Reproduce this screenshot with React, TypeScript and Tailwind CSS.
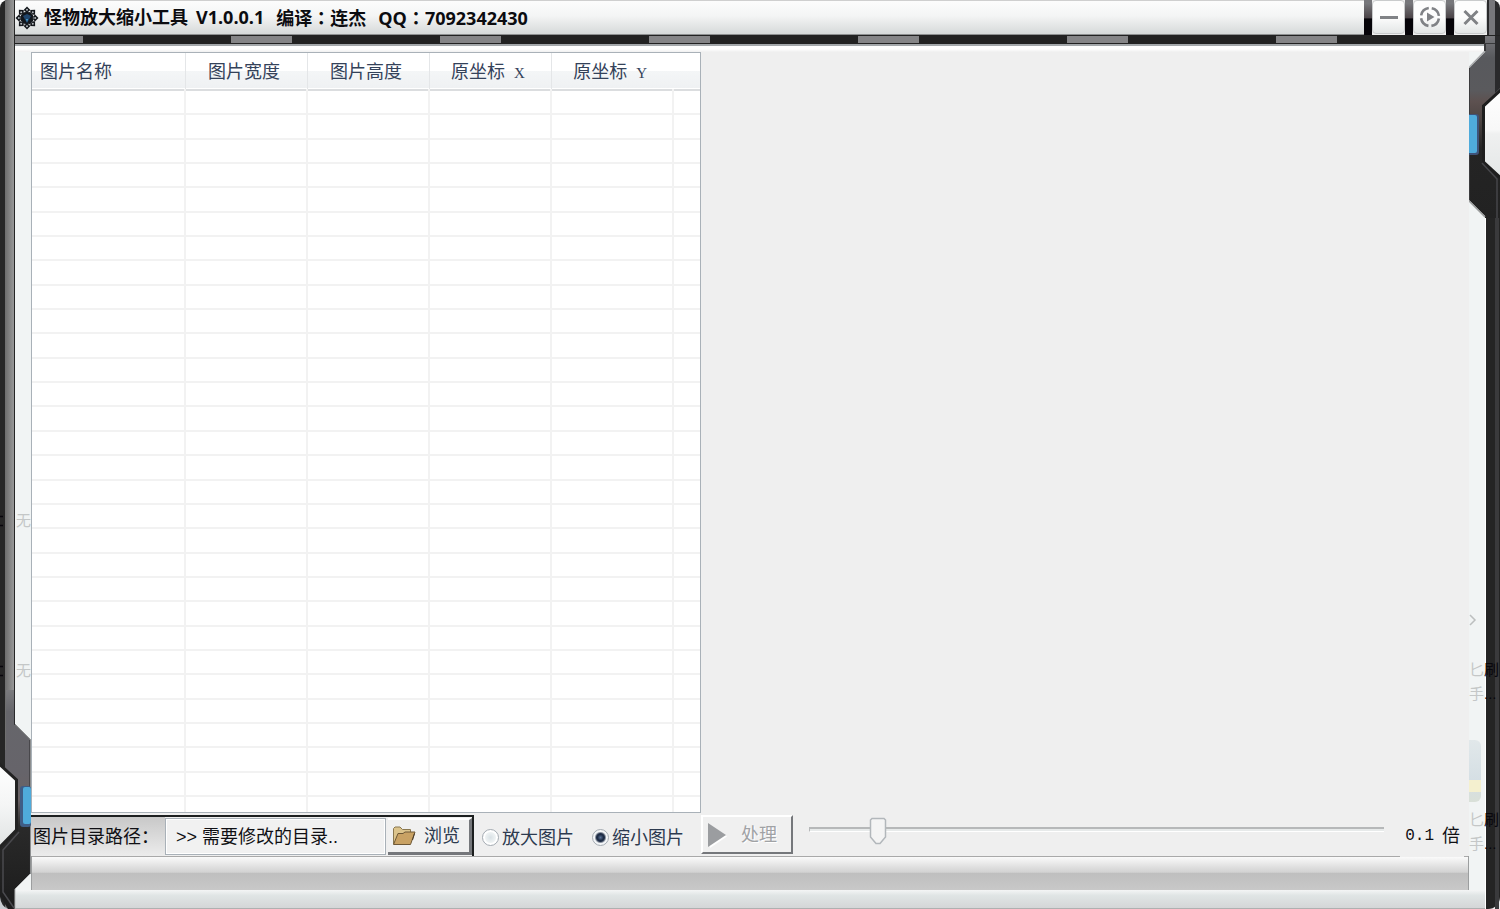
import { useState } from "react";

const ROWS = Array.from({ length: 29 }, (_, i) => i);
const PETALS = [0, 45, 90, 135, 180, 225, 270, 315];

const cjk = "font-['Liberation_Sans','Noto_Sans_CJK_SC',sans-serif]";

function AppIcon() {
  return (
    <svg viewBox="-12 -12 24 24" className="h-6 w-6 shrink-0" aria-hidden="true">
      {PETALS.map((a) => (
        <g key={a} transform={`rotate(${a})`}>
          <path d="M0 -11.5 L3.4 -8 L0 -5 L-3.4 -8 Z" fill="#14171c" />
          <circle cx="0" cy="-8.2" r="1" fill="#b4b9be" />
        </g>
      ))}
      <circle r="6.6" fill="#12161c" />
      <circle r="6.4" fill="none" stroke="#8d949b" strokeWidth="0.8" strokeDasharray="1.2 2.6" />
      <path d="M-4 -2 L0 -4 L4 -2 L0 5 Z" fill="#21466d" />
      <path d="M-1 1 L1 1 L0 4 Z" fill="#43a0d0" />
    </svg>
  );
}

function Colon() {
  return <span className="font-['Noto_Sans_CJK_TC',sans-serif]">：</span>;
}

function LeftRail() {
  return (
    <div className="flex w-[15px] shrink-0 bg-[#262626]">
      <div className="ml-[5px] w-[9px] bg-linear-to-r from-[#6c6c6c] to-[#989898]" />
    </div>
  );
}

function WindowButton({ label, children }: { label: string; children: React.ReactNode }) {
  return (
    <button
      type="button"
      aria-label={label}
      className="flex h-[34px] w-[33px] items-center justify-center rounded-sm border border-[#c9cbcc] bg-linear-to-b from-[#fdfdfd] from-50% to-[#e3e6e6]"
    >
      <svg viewBox="0 0 22 22" className="h-[22px] w-[22px]" fill="none" stroke="#808286" strokeWidth="3">
        {children}
      </svg>
    </button>
  );
}

function Gap() {
  return <div className="w-2 bg-linear-to-b from-[#77777b] from-10% via-[#4c4549] via-50% to-[#060409] to-55%" />;
}

function TitleBar() {
  return (
    <header className="flex h-[35px]">
      <LeftRail />
      <div className="flex min-w-0 flex-1 items-center gap-[5px] border-y border-t-[#cfcfcf] border-b-[#8d8f90] bg-linear-to-b from-[#fcfcfc] via-[#f4f5f5] via-45% to-[#d6d9d9]">
        <AppIcon />
        <h1 className="flex gap-x-3 text-[18px] leading-6 font-bold whitespace-nowrap text-[#0c0c10] font-['Open_Sans','Noto_Sans_CJK_SC',sans-serif]">
          <span className="flex gap-2">
            <span>怪物放大缩小工具</span>
            <span>V1.0.0.1</span>
          </span>
          <span>编译<Colon />连杰</span>
          <span>QQ<Colon />7092342430</span>
        </h1>
      </div>
      <Gap />
      <WindowButton label="最小化">
        <path d="M2 11.5H20" />
      </WindowButton>
      <Gap />
      <WindowButton label="菜单">
        <circle cx="11" cy="11" r="9" strokeWidth="2.6" strokeDasharray="11.1 3.037" strokeDashoffset="-1.5" />
        <path d="M8 6.5L15.5 11L8 15.5Z" fill="#808286" stroke="none" />
      </WindowButton>
      <Gap />
      <WindowButton label="关闭">
        <path d="M4.5 5L17.5 18M17.5 5L4.5 18" />
      </WindowButton>
      <div className="flex w-[13px] shrink-0 bg-[#2a2a2c]">
        <div className="ml-0.5 w-1.5 bg-[#77777b]" />
      </div>
    </header>
  );
}

function Strip() {
  return (
    <div className="flex h-[9px] bg-[#222222]">
      <LeftRail />
      <div className="my-px w-[7px] bg-[#858587]" />
      <div className="my-px flex-1 bg-[repeating-linear-gradient(90deg,#858587_0px,#858587_61px,#222222_61px,#222222_209px)]" />
      <div className="w-[5px] shrink-0" />
    </div>
  );
}

function ImageTable() {
  return (
    <div className="min-h-0 w-[670px] flex-1 border border-[#a9b1b8] bg-white">
      <table className={`h-full w-full table-fixed border-collapse text-[18px] leading-6 text-[#34425a] ${cjk}`}>
        <colgroup>
          <col className="w-[153px]" />
          <col className="w-[122px]" />
          <col className="w-[122px]" />
          <col className="w-[122px]" />
          <col className="w-[122px]" />
          <col />
        </colgroup>
        <thead>
          <tr className="h-[37px] border-b-2 border-[#dbdddf] bg-linear-to-b from-white from-50% via-[#f4f6f7] via-51% to-[#eff1f3]">
            <th scope="col" className="border-r border-[#e4e6e8] pt-0.5 pb-0 pl-2 text-left font-normal">图片名称</th>
            <th scope="col" className="border-r border-[#e4e6e8] pt-0.5 pr-1 font-normal">图片宽度</th>
            <th scope="col" className="border-r border-[#e4e6e8] pt-0.5 pr-1 font-normal">图片高度</th>
            <th scope="col" className="border-r border-[#e4e6e8] pt-0.5 pr-1 font-normal">
              原坐标 <span className="ml-1 text-[15px] font-['Liberation_Serif',serif]">X</span>
            </th>
            <th scope="col" className="pt-0.5 pr-1 font-normal">
              原坐标 <span className="ml-1 text-[15px] font-['Liberation_Serif',serif]">Y</span>
            </th>
            <td className="p-0" />
          </tr>
        </thead>
        <tbody>
          {ROWS.map((r) => (
            <tr key={r} className="border-b-2 border-[#f2f2f2]">
              <td className="border-r-2 border-[#f2f2f2] p-0" />
              <td className="border-r-2 border-[#f2f2f2] p-0" />
              <td className="border-r-2 border-[#f2f2f2] p-0" />
              <td className="border-r-2 border-[#f2f2f2] p-0" />
              <td className="border-r-2 border-[#f2f2f2] p-0" />
              <td className="p-0" />
            </tr>
          ))}
          <tr className="h-4">
            <td className="border-r-2 border-[#f2f2f2] p-0" />
            <td className="border-r-2 border-[#f2f2f2] p-0" />
            <td className="border-r-2 border-[#f2f2f2] p-0" />
            <td className="border-r-2 border-[#f2f2f2] p-0" />
            <td className="border-r-2 border-[#f2f2f2] p-0" />
            <td className="p-0" />
          </tr>
        </tbody>
      </table>
    </div>
  );
}

function FolderIcon() {
  return (
    <svg viewBox="0 0 24 20" className="h-5 w-6" aria-hidden="true">
      <path d="M1.5 18V2.5L3 1H8L10.5 3.5H18.5V8" fill="#dcc48c" stroke="#8a7850" />
      <path d="M1.5 18.5L6 7.5H11L13 6H23L18.5 18.5Z" fill="#c9a264" stroke="#6e5836" strokeLinejoin="round" />
      <path d="M20.500 14L22.500 7.500" stroke="#4a3a28" />
    </svg>
  );
}

const radioClass =
  "h-[17px] w-[17px] appearance-none rounded-full border border-[#a4abb2] bg-[radial-gradient(circle,#d9e1e5_0px,#eef2f3_5px,#ffffff_6px,#ffffff_7px)] checked:bg-[radial-gradient(circle_at_50%_50%,#5b7396_0px,#1c2b45_3px,#24324a_4px,#f4f6f8_6px)]";

function Controls() {
  const [mode, setMode] = useState("shrink");
  const [scale, setScale] = useState(12);
  return (
    <div className={`mt-0.5 flex h-[41px] items-stretch text-[18px] leading-6 text-[#2d3a4f] ${cjk}`}>
      <div className="flex w-[443px] shrink-0 border-t-2 border-r-2 border-[#1c1f1f] bg-[#efefef]">
        <label
          htmlFor="dir"
          className="flex w-[134px] items-center bg-linear-to-b from-[#c8c8c8] to-[#ececec] pl-0.5 whitespace-nowrap text-[#101014]"
        >
          图片目录路径：
        </label>
        <input
          id="dir"
          readOnly
          defaultValue=">> 需要修改的目录.."
          className="my-px w-[221px] border border-[#a9b1b8] bg-[#f1f1f1] px-2.5 text-[#101014] shadow-[inset_0_0_0_1px_#ffffff] outline-none"
        />
        <button
          type="button"
          className="my-px ml-0.5 flex flex-1 items-center gap-2 border-t-2 border-r-3 border-b-3 border-t-white border-r-[#75777b] border-b-[#75777b] bg-[#f0f0f0] pl-1"
        >
          <FolderIcon />
          浏览
        </button>
      </div>
      <div className="flex w-[227px] shrink-0 items-center gap-[18px] pt-1 pl-2">
        <label className="flex items-center gap-[3px] whitespace-nowrap">
          <input type="radio" name="mode" className={radioClass} checked={mode === "grow"} onChange={() => setMode("grow")} />
          放大图片
        </label>
        <label className="flex items-center gap-[3px] whitespace-nowrap">
          <input type="radio" name="mode" className={radioClass} checked={mode === "shrink"} onChange={() => setMode("shrink")} />
          缩小图片
        </label>
      </div>
      <button
        type="button"
        disabled
        className="flex h-[39px] w-[92px] shrink-0 items-center gap-[14px] border-2 border-t-white border-r-[#75777b] border-b-[#75777b] border-l-white bg-[#f0f0f0] pl-1 text-[#a0a2a5] [text-shadow:1px_1px_0_#ffffff]"
      >
        <svg viewBox="0 0 20 26" className="h-[26px] w-5" aria-hidden="true">
          <path d="M2 2.500L20 14.500L3 26Z" fill="#ffffff" />
          <path d="M1 1L19 13L1 25Z" fill="#9b9da0" />
        </svg>
        处理
      </button>
      <div className="relative mt-0.5 ml-4 h-8 flex-1">
        <div className="mt-[10px] h-[5px] border-t-2 border-b border-l border-t-[#b6b8b9] border-b-white border-l-[#b6b8b9] bg-[#e7eaea]" />
        <input
          type="range"
          aria-label="缩放倍数"
          min={0}
          max={100}
          value={scale}
          onChange={(e) => setScale(Number(e.target.value))}
          className="absolute inset-0 m-0 h-full w-full opacity-0"
        />
        <svg
          viewBox="0 0 18 28"
          className="pointer-events-none absolute top-0 h-7 w-[18px] -translate-x-1/2"
          style={{ left: `${scale}%` }}
          aria-hidden="true"
        >
          <path d="M3 1.5H15L16.5 3V20L11 26.500H7L1.5 20V3Z" fill="#f4f4f4" stroke="#b2b7bb" strokeWidth="1.5" />
        </svg>
      </div>
      <output className="flex w-[85px] shrink-0 items-center justify-end gap-2 pr-[9px] text-[#101014]">
        <span className="text-base font-['Liberation_Mono',monospace]">0.1</span>倍
      </output>
    </div>
  );
}

function StatusBar() {
  return (
    <div className="flex h-[34px] flex-col border-x border-[#9c9e9f]">
      <div className="flex h-px">
        <div className="flex-1 bg-[#a9a9a9]" />
        <div className="w-16" />
        <div className="w-1 bg-[#a9a9a9]" />
      </div>
      <div className="flex-1 bg-linear-to-b from-[#fafafa] via-[#d2d2d2] via-46% to-[#c8c8c8]">
        <div className="h-full bg-linear-to-b from-transparent from-46% via-[#bfbfbf] via-50% to-[#c8c8c8]" />
      </div>
    </div>
  );
}

function LeftOrnament() {
  return (
    <svg viewBox="0 0 31 219" className="absolute bottom-0 left-0 h-[219px] w-[31px]" aria-hidden="true">
      <defs>
        <linearGradient id="lo" x1="0" y1="0" x2="0" y2="1">
          <stop offset="0" stopColor="#7a7a7d" />
          <stop offset="0.1" stopColor="#66666b" />
          <stop offset="0.38" stopColor="#66646a" />
          <stop offset="0.5" stopColor="#6b6365" />
          <stop offset="0.62" stopColor="#2a2a2a" />
          <stop offset="1" stopColor="#1c1c1c" />
        </linearGradient>
        <linearGradient id="lw" x1="0" y1="0" x2="0" y2="1">
          <stop offset="0" stopColor="#ffffff" />
          <stop offset="0.5" stopColor="#f4f5f5" />
          <stop offset="1" stopColor="#dfe2e2" />
        </linearGradient>
      </defs>
      <path d="M6 0H14V34L30 50V184L15 199V219H8L0 206V60H6Z" fill="url(#lo)" />
      <path d="M14.5 0V34L30 49.5V184" fill="none" stroke="#2a2a2c" />
      <path d="M30 184L15 199V219" fill="none" stroke="#b4b6b6" />
      <path d="M0 0H5V80L0 76Z" fill="#262626" />
      <path d="M-2 73L16.500 90V140L-2 159Z" fill="url(#lw)" stroke="#222222" strokeWidth="3" />
      <path d="M19 142L3 160V202L14 218" fill="none" stroke="#4a4a4e" strokeWidth="1.5" />
      <rect x="20" y="96" width="11" height="41" rx="3" fill="#3f5d86" />
      <rect x="23" y="97" width="8" height="37" rx="2" fill="#4fabdb" />
      <path d="M0 207V219H8Q1 216 0 207Z" fill="#c9ccd0" />
    </svg>
  );
}

function RightOrnament() {
  return (
    <svg viewBox="0 0 31 182" className="absolute top-9 right-0 h-[182px] w-[31px]" aria-hidden="true">
      <defs>
        <linearGradient id="ro" x1="0" y1="0" x2="0" y2="1">
          <stop offset="0" stopColor="#77777b" />
          <stop offset="0.12" stopColor="#58595d" />
          <stop offset="0.3" stopColor="#5a5a5d" />
          <stop offset="0.36" stopColor="#5d5150" />
          <stop offset="0.46" stopColor="#4d4543" />
          <stop offset="0.62" stopColor="#242424" />
          <stop offset="1" stopColor="#222222" />
        </linearGradient>
        <linearGradient id="rw" x1="0" y1="0" x2="0" y2="1">
          <stop offset="0" stopColor="#ffffff" />
          <stop offset="0.45" stopColor="#f8f8f8" />
          <stop offset="0.5" stopColor="#eff0f0" />
          <stop offset="1" stopColor="#e4e7e7" />
        </linearGradient>
      </defs>
      <path d="M16 0H31V182H16V180L0 164V32L16 16Z" fill="url(#ro)" />
      <path d="M0.500 32V164" fill="none" stroke="#3c3c3e" />
      <path d="M16 15L0.500 31" fill="none" stroke="#a7a9ab" strokeWidth="1.500" />
      <path d="M0 165L16 181" fill="none" stroke="#9b9d9d" strokeWidth="1.500" />
      <path d="M16 7V15" stroke="#39393b" strokeWidth="2" />
      <path d="M16 7.500H26" stroke="#39393b" />
      <path d="M26 0H31V52L26 57Z" fill="#2a2a2c" />
      <rect x="-3" y="78" width="13" height="41" rx="3" fill="#3f5278" />
      <rect x="-2" y="79" width="10" height="38" rx="2" fill="#4fabdb" />
      <path d="M33 53L14.500 70V126L33 143Z" fill="url(#rw)" stroke="#1e1e1e" strokeWidth="3" />
      <path d="M13 127L28 143V182" fill="none" stroke="#46464a" strokeWidth="1.500" />
    </svg>
  );
}

function ShortcutGhost() {
  return (
    <div className="text-[15px] leading-6 text-[#c4c7c7]">
      <div className="flex">
        <span>匕</span>
        <span className="text-[#08060c]">刷</span>
      </div>
      <div className="flex">
        <span>手</span>
        <span className="text-[#08060c]">...</span>
      </div>
    </div>
  );
}

function RailGhost() {
  return (
    <svg viewBox="0 0 3 12" className="h-3 w-[3px]" aria-hidden="true">
      <path d="M0 1.500H3M0 10.500H3" stroke="#08060c" strokeWidth="1.500" />
    </svg>
  );
}

function Ghosts() {
  return (
    <div className={cjk} aria-hidden="true">
      <div className="absolute bottom-[376px] left-0 flex w-[31px] items-center gap-[13px] text-[15px] leading-6 text-[#c4c7c7]">
        <RailGhost />
        <span>无</span>
      </div>
      <div className="absolute bottom-[226px] left-0 flex w-[31px] items-center gap-[13px] text-[15px] leading-6 text-[#c4c7c7]">
        <RailGhost />
        <span>无</span>
      </div>
      <div className="absolute right-0 bottom-[53px] flex w-[31px] flex-col">
        <svg viewBox="0 0 10 12" className="h-3 w-2.5" aria-hidden="true">
          <path d="M1 1L6 6L1 11" fill="none" stroke="#bcbfbf" strokeWidth="1.500" />
        </svg>
        <div className="mt-8">
          <ShortcutGhost />
        </div>
        <div className="mt-[34px] h-[62px] w-3 overflow-hidden rounded-r-md bg-linear-to-b from-[#e1e8ea] via-[#d5dfe4] via-65% to-[#d9e0d8]">
          <div className="h-10" />
          <div className="h-3 bg-[#f4f0cf]" />
        </div>
        <div className="mt-1.5">
          <ShortcutGhost />
        </div>
      </div>
    </div>
  );
}

export default function App() {
  return (
    <div className="relative flex h-screen flex-col overflow-hidden rounded-t-lg bg-[#efefef]">
      <TitleBar />
      <Strip />
      <div className="flex min-h-0 flex-1">
        <LeftRail />
        <main className="flex min-w-0 flex-1 flex-col bg-[#f1f4f4]">
          <div className="h-2 shrink-0 border-t-2 border-[#a4a8ab] bg-linear-to-b from-white from-50% to-[#efefef]" />
          <div className="mx-4 flex min-h-0 flex-1 flex-col bg-[#efefef]">
            <ImageTable />
            <Controls />
            <StatusBar />
          </div>
          <footer className="h-[19px] shrink-0 border-b border-[#aeb0b0] bg-linear-to-b from-[#f4f5f5] via-[#e0e5e5] via-30% to-[#d4d6d7]" />
        </main>
        <div className="flex w-[15px] shrink-0 rounded-br-xl border-l border-white bg-[#242424]">
          <div className="ml-[9px] w-1 bg-[#3a3a3c]" />
        </div>
      </div>
      <LeftOrnament />
      <RightOrnament />
      <Ghosts />
    </div>
  );
}
